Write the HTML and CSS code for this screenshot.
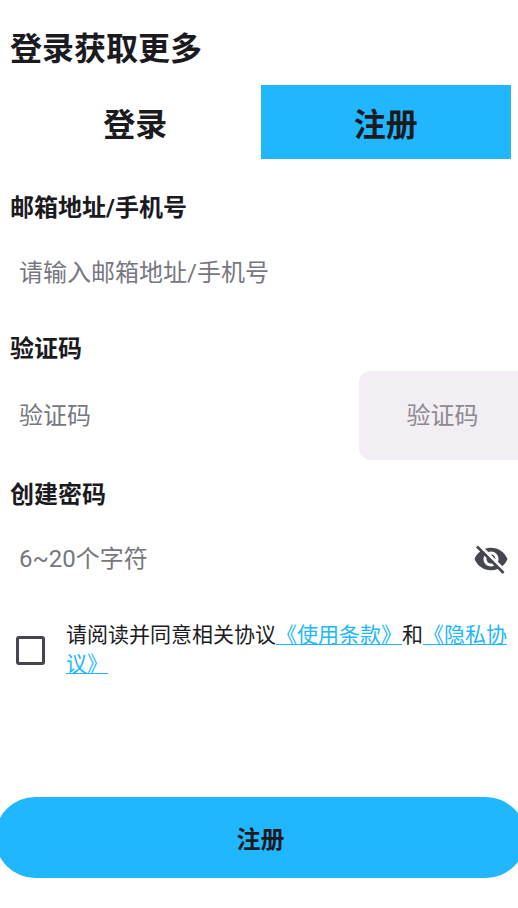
FILE: index.html
```html
<!DOCTYPE html>
<html lang="zh-CN">
<head>
<meta charset="utf-8">
<meta name="viewport" content="width=device-width, initial-scale=1">
<title>注册</title>
<link rel="stylesheet" href="styles.css">
</head>
<body>
<main class="page">
  <h1 class="title">登录获取更多</h1>
  <nav class="tabs">
    <button class="tab" type="button">登录</button>
    <button class="tab tab-active" type="button">注册</button>
  </nav>
  <form class="form">
    <div class="field field-account">
      <label class="label" for="account">邮箱地址/手机号</label>
      <input class="input" id="account" type="text" placeholder="请输入邮箱地址/手机号">
    </div>
    <div class="field field-code">
      <label class="label" for="code">验证码</label>
      <div class="row">
        <input class="input" id="code" type="text" placeholder="验证码">
        <button class="send" type="button">验证码</button>
      </div>
    </div>
    <div class="field field-password">
      <label class="label" for="password">创建密码</label>
      <div class="row">
        <input class="input" id="password" type="password" placeholder="6~20个字符">
        <button class="eye" type="button" aria-label="显示密码">
          <svg viewBox="0 0 24 24" width="36" height="36" fill="#45464f"><path d="M12 7c2.76 0 5 2.24 5 5 0 .65-.13 1.26-.36 1.83l2.92 2.92c1.51-1.26 2.7-2.89 3.43-4.75-1.73-4.39-6-7.5-11-7.5-1.4 0-2.74.25-3.98.7l2.16 2.16C10.74 7.13 11.35 7 12 7zM2 4.27l2.28 2.28.46.46C3.08 8.3 1.78 10.02 1 12c1.73 4.39 6 7.5 11 7.5 1.55 0 3.03-.3 4.38-.84l.42.42L19.73 22 21 20.73 3.27 3 2 4.27zM7.53 9.8l1.55 1.55c-.05.21-.08.43-.08.65 0 1.66 1.34 3 3 3 .22 0 .44-.03.65-.08l1.55 1.55c-.67.33-1.41.53-2.2.53-2.76 0-5-2.24-5-5 0-.79.2-1.53.53-2.2zm4.31-.78l3.15 3.15.02-.16c0-1.66-1.34-3-3-3l-.17.01z"/></svg>
        </button>
      </div>
    </div>
    <div class="agree">
      <input class="check" id="agree" type="checkbox">
      <label class="terms" for="agree">请阅读并同意相关协议<a href="#terms">《使用条款》</a>和<a href="#privacy">《隐私协议》</a></label>
    </div>
    <button class="submit" type="submit">注册</button>
  </form>
</main>
</body>
</html>
```
FILE: styles.css
```css
* { box-sizing: border-box; }
body {
  margin: 0;
  background: #fff;
  color: #1b1b1f;
  font-family: Roboto, "Noto Sans CJK SC", sans-serif;
  overflow-x: hidden;
}
button, input { font: inherit; color: inherit; }
button { border: 0; padding: 0; background: none; }
.page { padding-top: 25px; }
.title { margin: 0 10px; font-size: 32px; line-height: 48px; font-weight: 700; }
.tabs { display: flex; margin: 12px 7px 0 10px; }
.tab { flex: 1; height: 74px; font-size: 32px; font-weight: 700; }
.tab-active { background: #20b7ff; }
.form { display: flex; flex-direction: column; margin-top: 31px; }
.field { display: flex; flex-direction: column; }
.label { margin-left: 10px; font-size: 24px; line-height: 36px; font-weight: 700; }
.row { display: flex; align-items: center; }
.input {
  flex: 1;
  min-width: 0;
  height: 88px;
  padding: 0 19px;
  border: 0;
  outline: 0;
  background: none;
  font-size: 24px;
}
.input::placeholder { color: #77777f; opacity: 1; }
.field-account .input { flex: none; margin-top: 3px; }
.field-code { margin-top: 14px; }
.field-code .row { margin-top: 4px; }
.send {
  width: 159px;
  height: 89px;
  padding: 0 0 4px 8px;
  border-radius: 12px 0 0 12px;
  background: #f3edf4;
  color: #8d8991;
  font-size: 24px;
}
.field-password { margin-top: 17px; }
.field-password .row { margin-top: 2px; }
.eye { display: flex; margin-right: 9px; }
.agree { display: flex; align-items: center; margin: 18px 10px 0 16px; gap: 21px; }
.check {
  flex: none;
  appearance: none;
  width: 29px;
  height: 29px;
  margin: 0;
  border: 3px solid #45464f;
  border-radius: 3px;
}
.terms { font-size: 21px; line-height: 29px; }
.terms a {
  color: #20b7ff;
  text-decoration-thickness: 1px;
  text-underline-offset: 2px;
}
.submit {
  height: 81px;
  margin: 118px -8px 0 -5px;
  border-radius: 41px;
  background: #20b7ff;
  font-size: 24px;
  font-weight: 700;
}
```
